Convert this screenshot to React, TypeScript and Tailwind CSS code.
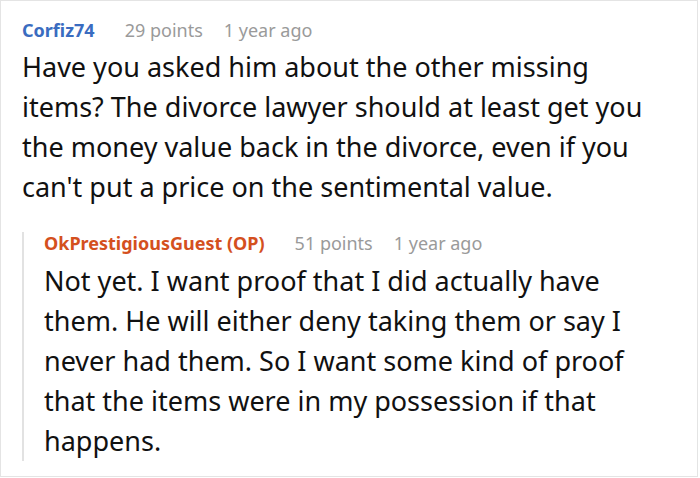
import React from "react";

const COMMENT = {
  user: "Corfiz74",
  points: "29 points",
  time: "1 year ago",
  body: "Have you asked him about the other missing items? The divorce lawyer should at least get you the money value back in the divorce, even if you can't put a price on the sentimental value.",
};

const REPLY = {
  user: "OkPrestigiousGuest (OP)",
  points: "51 points",
  time: "1 year ago",
  body: "Not yet. I want proof that I did actually have them. He will either deny taking them or say I never had them. So I want some kind of proof that the items were in my possession if that happens.",
};

function Meta({ user, points, time, color }: { user: string; points: string; time: string; color: string }) {
  return (
    <div className="flex items-baseline text-[18px] leading-[22px]">
      <span className={`font-bold ${color}`}>{user}</span>
      <span className="ml-[30px] text-[#9a9a9a]">{points}</span>
      <span className="ml-[21px] text-[#9a9a9a]">{time}</span>
    </div>
  );
}

export default function App() {
  return (
    <div className="w-[700px] h-[478px] bg-white font-['Noto_Sans',sans-serif]">
      <div className="h-[477px] w-[698px] border border-[#e4e4e4] pl-[21px] pr-[26px] pt-[18px]">
        <Meta {...COMMENT} color="text-[#3a6cc0]" />
        <p className="mt-[6px] text-[27px] leading-[40px] text-[#111111]">{COMMENT.body}</p>
        <div className="mt-[25px] border-l-2 border-[#e2e2e2] pl-[20px]">
          <Meta {...REPLY} color="text-[#d4501e]" />
          <p className="mt-[7px] text-[27px] leading-[40px] text-[#111111]">{REPLY.body}</p>
        </div>
      </div>
    </div>
  );
}
